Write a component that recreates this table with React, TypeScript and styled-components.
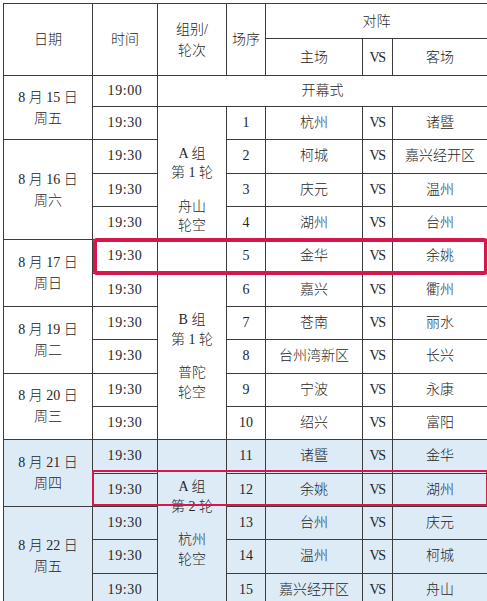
import React from "react";
import styled, { createGlobalStyle } from "styled-components";

const GlobalStyle = createGlobalStyle`
  html, body {
    margin: 0;
    padding: 0;
    background: #ffffff;
  }
  body {
    font-family: "Liberation Serif", "Noto Sans CJK SC", serif;
    color: #1c1c1c;
  }
`;

type Match = {
  no: number;
  home: string;
  away: string;
};

type Row = {
  date?: { day: string; week: string; span: number };
  time: string;
  group?: { lines: string[]; span: number };
  match?: Match;
  opening?: boolean;
  tint?: boolean;
};

const rows: Row[] = [
  { date: { day: "8 月 15 日", week: "周五", span: 2 }, time: "19:00", opening: true },
  {
    time: "19:30",
    group: { lines: ["A 组", "第 1 轮", "", "舟山", "轮空"], span: 5 },
    match: { no: 1, home: "杭州", away: "诸暨" },
  },
  { date: { day: "8 月 16 日", week: "周六", span: 3 }, time: "19:30", match: { no: 2, home: "柯城", away: "嘉兴经开区" } },
  { time: "19:30", match: { no: 3, home: "庆元", away: "温州" } },
  { time: "19:30", match: { no: 4, home: "湖州", away: "台州" } },
  { date: { day: "8 月 17 日", week: "周日", span: 2 }, time: "19:30", match: { no: 5, home: "金华", away: "余姚" } },
  {
    time: "19:30",
    group: { lines: ["B 组", "第 1 轮", "", "普陀", "轮空"], span: 5 },
    match: { no: 6, home: "嘉兴", away: "衢州" },
  },
  { date: { day: "8 月 19 日", week: "周二", span: 2 }, time: "19:30", match: { no: 7, home: "苍南", away: "丽水" } },
  { time: "19:30", match: { no: 8, home: "台州湾新区", away: "长兴" } },
  { date: { day: "8 月 20 日", week: "周三", span: 2 }, time: "19:30", match: { no: 9, home: "宁波", away: "永康" } },
  { time: "19:30", match: { no: 10, home: "绍兴", away: "富阳" } },
  {
    date: { day: "8 月 21 日", week: "周四", span: 2 },
    time: "19:30",
    group: { lines: ["A 组", "第 2 轮", "", "杭州", "轮空"], span: 5 },
    match: { no: 11, home: "诸暨", away: "金华" },
    tint: true,
  },
  { time: "19:30", match: { no: 12, home: "余姚", away: "湖州" }, tint: true },
  { date: { day: "8 月 22 日", week: "周五", span: 3 }, time: "19:30", match: { no: 13, home: "台州", away: "庆元" }, tint: true },
  { time: "19:30", match: { no: 14, home: "温州", away: "柯城" }, tint: true },
  { time: "19:30", match: { no: 15, home: "嘉兴经开区", away: "舟山" }, tint: true },
];

const Page = styled.div`
  padding: 3px 0 0 3px;
  width: 487px;
  height: 601px;
  box-sizing: border-box;
  overflow: hidden;
`;

const Frame = styled.div`
  position: relative;
  width: 484px;
`;

const Table = styled.table`
  width: 484px;
  border-collapse: collapse;
  table-layout: fixed;
  font-size: 14px;
  font-weight: 300;
  color: #262626;
  border: 1px solid #222;
`;

const HeadRow = styled.tr<{ $h: number }>`
  height: ${(p) => p.$h}px;
`;

const BodyRow = styled.tr<{ $h: number; $tint?: boolean }>`
  height: ${(p) => p.$h}px;
  background: ${(p) => (p.$tint ? "#ddebf7" : "#ffffff")};
`;

const Cell = styled.td`
  border: 1px solid #3c3c3c;
  padding: 0;
  text-align: center;
  vertical-align: middle;
  white-space: nowrap;
  line-height: 20px;
`;

const HeadCell = styled(Cell).attrs({ as: "th" })`
  font-weight: 300;
  line-height: 21px;
`;

const Stack = styled.div<{ $lh: number }>`
  display: flex;
  flex-direction: column;
  align-items: center;
  line-height: ${(p) => p.$lh}px;
`;

const Line = styled.span`
  min-height: 1em;
`;

const Versus = styled.span`
  letter-spacing: -1.5px;
  padding-right: 1px;
`;

const Time = styled.span`
  letter-spacing: 0.6px;
`;

const Highlight = styled.div<{ $top: number; $height: number; $left: number; $weight: number; $radius: number }>`
  position: absolute;
  top: ${(p) => p.$top}px;
  left: ${(p) => p.$left}px;
  right: -1px;
  height: ${(p) => p.$height}px;
  border: ${(p) => p.$weight}px solid #d5174b;
  border-radius: ${(p) => p.$radius}px;
  box-sizing: border-box;
  pointer-events: none;
`;

export default function App() {
  return (
    <Page>
      <GlobalStyle />
      <Frame>
        <Table>
          <colgroup>
            <col style={{ width: 89 }} />
            <col style={{ width: 65 }} />
            <col style={{ width: 69 }} />
            <col style={{ width: 39 }} />
            <col style={{ width: 97 }} />
            <col style={{ width: 30 }} />
            <col style={{ width: 95 }} />
          </colgroup>
          <thead>
            <HeadRow $h={35}>
              <HeadCell rowSpan={2}>日期</HeadCell>
              <HeadCell rowSpan={2}>时间</HeadCell>
              <HeadCell rowSpan={2}>
                <Stack $lh={21}>
                  <Line>组别/</Line>
                  <Line>轮次</Line>
                </Stack>
              </HeadCell>
              <HeadCell rowSpan={2}>场序</HeadCell>
              <HeadCell colSpan={3}>对阵</HeadCell>
            </HeadRow>
            <HeadRow $h={37}>
              <HeadCell>主场</HeadCell>
              <HeadCell>
                <Versus>VS</Versus>
              </HeadCell>
              <HeadCell>客场</HeadCell>
            </HeadRow>
          </thead>
          <tbody>
            {rows.map((r, i) => (
              <BodyRow key={i} $h={r.opening ? 31 : 33.33} $tint={r.tint}>
                {r.date && (
                  <Cell rowSpan={r.date.span}>
                    <Stack $lh={21}>
                      <Line>{r.date.day}</Line>
                      <Line>{r.date.week}</Line>
                    </Stack>
                  </Cell>
                )}
                <Cell>
                  <Time>{r.time}</Time>
                </Cell>
                {r.opening && <Cell colSpan={5}>开幕式</Cell>}
                {r.group && (
                  <Cell rowSpan={r.group.span}>
                    <Stack $lh={19.5}>
                      {r.group.lines.map((l, j) => (
                        <Line key={j}>{l}</Line>
                      ))}
                    </Stack>
                  </Cell>
                )}
                {r.match && (
                  <>
                    <Cell>{r.match.no}</Cell>
                    <Cell>{r.match.home}</Cell>
                    <Cell>
                      <Versus>VS</Versus>
                    </Cell>
                    <Cell>{r.match.away}</Cell>
                  </>
                )}
              </BodyRow>
            ))}
          </tbody>
        </Table>
        <Highlight $top={235} $height={37} $left={90} $weight={4} $radius={4} />
        <Highlight $top={467} $height={36} $left={89} $weight={2.5} $radius={1} />
      </Frame>
    </Page>
  );
}
